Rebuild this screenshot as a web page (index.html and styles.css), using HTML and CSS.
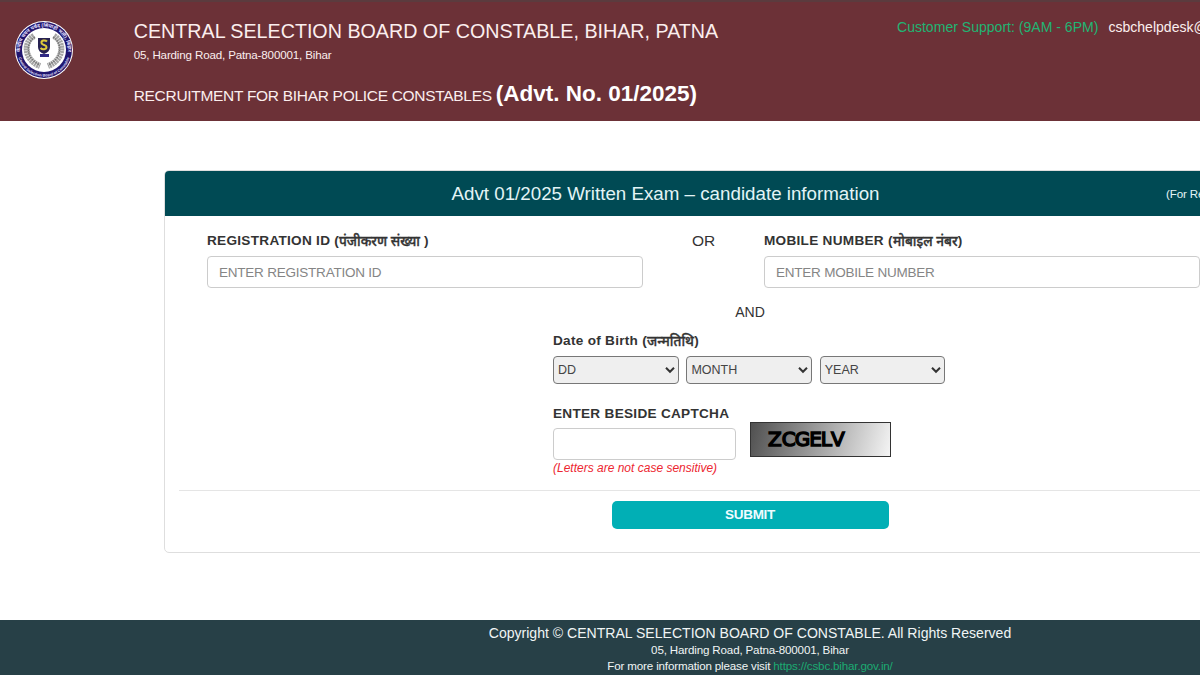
FILE: index.html
```
<!DOCTYPE html>
<html lang="en">
<head>
<meta charset="utf-8">
<title>Central Selection Board of Constable</title>
<link rel="stylesheet" href="styles.css">
</head>
<body>
<div class="page">
  <header class="header">
    <svg class="logo" viewBox="0 0 60 60">
      <defs>
        <path id="arc-top" d="M6.200 34 A24 24 0 1 1 53.800 34"/>
        <path id="arc-bottom" d="M4 36 A26.700 26.700 0 0 0 56 36"/>
      </defs>
      <circle cx="30" cy="30" r="29" fill="#fff"/>
      <circle cx="30" cy="30" r="28" fill="#20166f"/>
      <circle cx="30" cy="30" r="22" fill="#fff"/>
      <text class="seal-hi"><textPath href="#arc-top" startOffset="50%" text-anchor="middle">केन्द्रीय चयन पर्षद (सिपाही भर्ती), बिहार</textPath></text>
      <text class="seal-en"><textPath href="#arc-bottom" startOffset="50%" text-anchor="middle">Central Selection Board of Constable</textPath></text>
      <g fill="none" stroke="#a5a5a5" stroke-width="6" stroke-dasharray="2 .5">
        <path d="M20 16C9 22 10 40 26 46"/>
        <path d="M40 16C51 22 50 40 34 46"/>
      </g>
      <g fill="none" stroke="#777" stroke-width="1.500" stroke-dasharray="1.500 1">
        <path d="M21 17C11 23 12 39 26 45"/>
        <path d="M39 17C49 23 48 39 34 45"/>
      </g>
      <path d="M24 18h12v9q0 5-6 7-6-2-6-7z" fill="#272252"/>
      <path d="M33 21.500c-2-2-6-1-5.500 1.500s5 1.500 5 4-4 3-6 1" fill="none" stroke="#dfc83b" stroke-width="2"/>
      <path d="M26 34h9v3h-9z" fill="#302984"/>
    </svg>
    <div class="titles">
      <div class="board">CENTRAL SELECTION BOARD OF CONSTABLE, BIHAR, PATNA</div>
      <div class="address">05, Harding Road, Patna-800001, Bihar</div>
      <div class="recruitment">RECRUITMENT FOR BIHAR POLICE CONSTABLES <b>(Advt. No. 01/2025)</b></div>
    </div>
    <div class="support"><span>Customer Support: (9AM - 6PM)</span>csbchelpdesk@</div>
  </header>

  <main class="card">
    <div class="card-head">
      <h1>Advt 01/2025 Written Exam – candidate information</h1>
      <small>(For Re</small>
    </div>
    <form class="form">
      <div class="identity">
        <label class="field"><span class="label">REGISTRATION ID (<span class="hi reg">पंजीकरण संख्या</span> )</span><input placeholder="ENTER REGISTRATION ID"></label>
        <div class="or">OR</div>
        <label class="field"><span class="label">MOBILE NUMBER (<span class="hi mob">मोबाइल नंबर</span>)</span><input placeholder="ENTER MOBILE NUMBER"></label>
      </div>
      <div class="and">AND</div>
      <div class="details">
        <span class="label">Date of Birth (<span class="hi dob">जन्मतिथि</span>)</span>
        <div class="selects">
          <div class="select">DD<svg viewBox="0 0 10 8"><path d="M1 1.800l4 4 4-4"/></svg></div>
          <div class="select">MONTH<svg viewBox="0 0 10 8"><path d="M1 1.800l4 4 4-4"/></svg></div>
          <div class="select">YEAR<svg viewBox="0 0 10 8"><path d="M1 1.800l4 4 4-4"/></svg></div>
        </div>
        <div class="captcha">
          <div class="entry">
            <span class="label">ENTER BESIDE CAPTCHA</span>
            <input>
            <em>(Letters are not case sensitive)</em>
          </div>
          <div class="code">Z<span>CGEL</span>V</div>
        </div>
      </div>
      <hr>
      <button class="submit" type="button">SUBMIT</button>
    </form>
  </main>

  <footer class="footer">
    <div class="copyright">Copyright © CENTRAL SELECTION BOARD OF CONSTABLE. All Rights Reserved</div>
    <div>05, Harding Road, Patna-800001, Bihar</div>
    <div>For more information please visit <a>https://csbc.bihar.gov.in/</a></div>
  </footer>
</div>
</body>
</html>
```
FILE: styles.css
```
* { box-sizing: border-box; }
html, body { margin: 0; height: 675px; overflow: hidden; }
body { background: #fff; color: #333; font: 15px "Liberation Sans", "Noto Sans", sans-serif; }
.page { width: 1500px; height: 675px; display: flex; flex-direction: column; }

.header { height: 121px; flex: none; display: flex; background: #6c3137; border-top: 2px solid #5b3b3e; color: #fbeeee; }
.logo { width: 60px; height: 60px; margin: 18px 0 0 14px; flex: none; }
.seal-hi { font-size: 5px; font-weight: bold; fill: #e4e0ff; }
.seal-en { font-size: 3.800px; font-weight: bold; fill: #e4e0ff; }
.titles { margin: 17px 0 0 59.700px; width: 763.300px; white-space: nowrap; }
.board { font-size: 19.690px; line-height: 24px; }
.address { font-size: 11.600px; letter-spacing: -.160px; line-height: 15px; margin-top: 4px; }
.recruitment { font-size: 15.500px; letter-spacing: -.300px; line-height: 28px; margin-top: 18px; }
.recruitment b { font-size: 22.500px; letter-spacing: 0; color: #fff; }
.support { margin-top: 16px; font-size: 14.060px; line-height: 19px; white-space: nowrap; }
.support span { color: #1fb573; margin-right: 10px; }

.card { width: 1172px; height: 383px; flex: none; margin: 49px auto 0; border: 1px solid #dedede; border-radius: 5px; overflow: hidden; }
.card-head { height: 45px; display: flex; justify-content: space-between; align-items: center; background: #004a54; color: #e3f4f6; margin: 0 -1px; padding-left: 287.500px; }
.card-head h1 { margin: 0; font-size: 18.750px; font-weight: normal; }
.card-head small { font-size: 11.600px; letter-spacing: -.150px; width: 170px; }
.form { padding: 15px 14px 0; }
.identity { display: flex; padding-left: 28px; }
.field { width: 436px; display: block; }
.label { display: block; font-weight: bold; font-size: 13.600px; letter-spacing: .280px; line-height: 20px; height: 20px; white-space: nowrap; }
.hi { display: inline-block; height: 20px; vertical-align: top; font-size: 15px; font-weight: 500; -webkit-text-stroke: .400px #333; letter-spacing: 0; transform: scaleX(.9); transform-origin: left; }
.reg { margin-right: -9px; }
.mob { margin-right: -7px; }
.dob { margin-right: -5px; }
input { display: block; width: 100%; height: 32px; border: 1px solid #ccc; border-radius: 4px; padding: 0 11px; font: 13.500px "Liberation Sans", sans-serif; letter-spacing: -.220px; background: #fff; }
input::placeholder { color: #858585; opacity: 1; }
.field input { margin-top: 5px; }
.or { width: 121px; text-align: center; font-size: 15.500px; line-height: 19px; }
.and { text-align: center; line-height: 20px; margin-top: 14px; font-size: 14.060px; }
.details { width: 394px; margin: 9px auto 0; }
.selects { display: flex; gap: 7.800px; margin-top: 5px; }
.select { width: 125.600px; height: 28px; display: flex; align-items: center; justify-content: space-between; border: 1px solid #777; border-radius: 4px; background: #efefef; padding: 0 3px 0 4px; font-size: 12.500px; color: #444; }
.select svg { width: 10px; height: 8px; fill: none; stroke: #333; stroke-width: 2; }
.captcha { display: flex; gap: 14px; margin-top: 20px; }
.entry { width: 183px; }
.entry input { margin-top: 4px; }
.entry em { display: block; color: #ed2630; font-size: 12px; line-height: 16px; white-space: nowrap; }
.code { width: 141px; height: 35px; margin-top: 17.500px; border: 1px solid #333; background: linear-gradient(105deg, #505050, #f4f4f4); color: #000; font: 20px/33px "DejaVu Sans", sans-serif; -webkit-text-stroke: 1.500px #000; padding-left: 17px; }
.code span { letter-spacing: -1px; }
hr { border: 0; border-top: 1px solid #e5e5e5; margin: 14px 0 10px; }
.submit { display: block; width: 277px; height: 28px; margin: 0 auto; padding: 0 0 2px; border: 0; border-radius: 5px; background: #01afb5; color: #effcff; font: bold 13.500px "Liberation Sans", sans-serif; letter-spacing: -.250px; }

.footer { margin-top: auto; height: 55px; flex: none; background: #274047; color: #f0f5f5; text-align: center; font-size: 11.600px; letter-spacing: -.160px; line-height: 16px; padding-top: 3px; }
.copyright { font-size: 14.060px; letter-spacing: 0; line-height: 20px; margin-bottom: -1px; }
.footer a { color: #1cab72; }
```
